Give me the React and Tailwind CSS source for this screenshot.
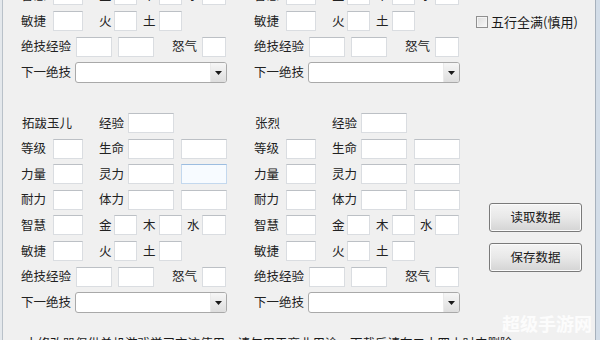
import React from "react";

const font = { fontFamily: '"Noto Sans CJK SC", "Noto Sans", sans-serif' };

function Box({ w, hl }) {
  return (
    <div
      className={`${w} h-[20px] shrink-0 border ${
        hl ? "bg-[#f7fbff] border-[#c3d8ee] border-t-[#9cbde0]" : "bg-white border-[#dadde1] border-t-[#bcc0c5]"
      }`}
    />
  );
}

function Lbl({ w, pl, children }) {
  return (
    <div className={`${w} ${pl || ""} shrink-0 h-[20px] flex items-center whitespace-nowrap text-[12.5px] text-[#222]`}>
      {children}
    </div>
  );
}

function Select() {
  return (
    <div className="w-[152px] h-[21px] shrink-0 flex bg-white border border-[#a9a9a9] rounded-[3px] overflow-hidden">
      <div className="flex-1" />
      <div className="w-[16px] h-full flex items-center justify-center bg-gradient-to-b from-[#f6f6f6] to-[#dedede] border-l border-[#eaeaea]">
        <svg width="7" height="4" viewBox="0 0 7 4">
          <path d="M0 0 L7 0 L3.5 4 Z" fill="#1a1a1a" />
        </svg>
      </div>
    </div>
  );
}

function Row({ children, h }) {
  return <div className={`flex items-center ${h || "h-[20px]"}`}>{children}</div>;
}

function WisdomRow() {
  return (
    <Row>
      <Lbl w="w-[32px]">智慧</Lbl>
      <Box w="w-[30px]" />
      <Lbl w="w-[31px]" pl="pl-[16px]">金</Lbl>
      <Box w="w-[23px]" />
      <Lbl w="w-[22px]" pl="pl-[6px]">木</Lbl>
      <Box w="w-[23px]" />
      <Lbl w="w-[20px]" pl="pl-[5px]">水</Lbl>
      <Box w="w-[24px]" />
    </Row>
  );
}

function AgilityRow() {
  return (
    <Row>
      <Lbl w="w-[32px]">敏捷</Lbl>
      <Box w="w-[30px]" />
      <Lbl w="w-[31px]" pl="pl-[16px]">火</Lbl>
      <Box w="w-[23px]" />
      <Lbl w="w-[22px]" pl="pl-[6px]">土</Lbl>
      <Box w="w-[23px]" />
    </Row>
  );
}

function SkillRow() {
  return (
    <Row>
      <Lbl w="w-[55px]">绝技经验</Lbl>
      <Box w="w-[36px]" />
      <div className="w-[6px] shrink-0" />
      <Box w="w-[36px]" />
      <Lbl w="w-[48px]" pl="pl-[18px]">怒气</Lbl>
      <Box w="w-[24px]" />
    </Row>
  );
}

function NextRow() {
  return (
    <Row h="h-[21px]">
      <Lbl w="w-[54px]">下一绝技</Lbl>
      <Select />
    </Row>
  );
}

function StatRow({ a, b, hl }) {
  return (
    <Row>
      <Lbl w="w-[32px]">{a}</Lbl>
      <Box w="w-[30px]" />
      <Lbl w="w-[45px]" pl="pl-[16px]">{b}</Lbl>
      <Box w="w-[46px]" />
      <div className="w-[7px] shrink-0" />
      <Box w="w-[46px]" hl={hl} />
    </Row>
  );
}

function TopPart() {
  return (
    <div className="flex flex-col gap-[5.6px]">
      <WisdomRow />
      <AgilityRow />
      <SkillRow />
      <NextRow />
    </div>
  );
}

function BottomPart({ name, hl }) {
  return (
    <div className="flex flex-col gap-[5.6px]">
      <Row>
        <Lbl w="w-[78px]" pl="pl-[1px]">{name}</Lbl>
        <Lbl w="w-[29px]">经验</Lbl>
        <Box w="w-[46px]" />
      </Row>
      <StatRow a="等级" b="生命" />
      <StatRow a="力量" b="灵力" hl={hl} />
      <StatRow a="耐力" b="体力" />
      <WisdomRow />
      <AgilityRow />
      <SkillRow />
      <NextRow />
    </div>
  );
}

function Column({ name, w, hl }) {
  return (
    <div className={`${w} shrink-0 flex flex-col mt-[-14.6px]`}>
      <TopPart />
      <div className="mt-[29.8px]">
        <BottomPart name={name} hl={hl} />
      </div>
    </div>
  );
}

function Button({ children }) {
  return (
    <div className="w-[93px] h-[29px] rounded-[3px] border border-[#7a7a7a] bg-gradient-to-b from-[#f4f4f4] via-[#e8e8e8] to-[#d4d4d4] flex items-center justify-center text-[12.5px] text-[#1a1a1a] shadow-[inset_0_0_0_1px_#fbfbfb]">
      {children}
    </div>
  );
}

export default function App() {
  return (
    <div className="w-[600px] h-[340px] overflow-hidden relative bg-[#f0f0f0] flex" style={font}>
      <div className="w-[3px] shrink-0 bg-[#e4e8ec] border-r border-[#b9c1c9]" />
      <div className="flex-1 flex flex-col">
        <div className="flex pl-[18px]">
          <Column name="拓跋玉儿" w="w-[233px]" hl />
          <Column name="张烈" w="w-[222px]" />
          <div className="flex-1 flex flex-col">
            <div className="flex items-center mt-[15px] h-[14px]">
              <div className="w-[12px] h-[12px] shrink-0 border border-[#8f8f8f] bg-gradient-to-br from-[#dcdcdc] to-[#f8f8f8] shadow-[inset_0_0_0_1px_#f4f4f4]" />
              <span className="ml-[3px] text-[13px] text-[#1a1a1a] whitespace-nowrap">五行全满(慎用)</span>
            </div>
            <div className="ml-[13px] mt-[174px] flex flex-col gap-[11px]">
              <Button>读取数据</Button>
              <Button>保存数据</Button>
            </div>
          </div>
        </div>
        <div className="pl-[22px] mt-[23px] text-[12.5px] leading-[14px] text-[#1a1a1a] whitespace-nowrap">
          本修改器仅供单机游戏学习交流使用，请勿用于商业用途，下载后请在二十四小时内删除
        </div>
      </div>
      <div className="w-[5px] shrink-0 bg-[#d3dde8] border-l border-[#a7b1bc]" />
      <div className="absolute left-[502px] top-[310px] text-[18px] font-bold text-white/80 whitespace-nowrap">
        超级手游网
      </div>
    </div>
  );
}
